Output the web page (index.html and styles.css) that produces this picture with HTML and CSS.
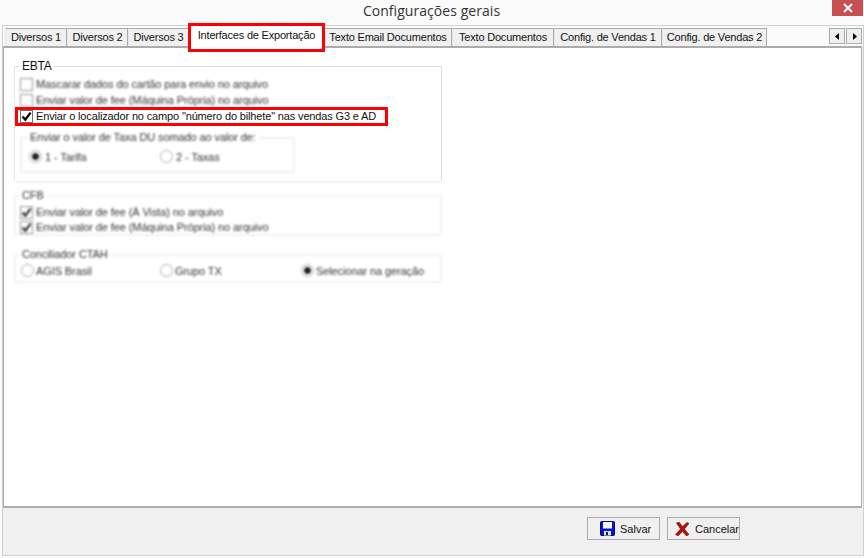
FILE: index.html
```html
<!DOCTYPE html>
<html lang="en">
<head>
    <meta charset="UTF-8">
    <title>Configurações gerais</title>
    <link rel="stylesheet" href="styles.css">
</head>
<body>
    <div class="window">
        <div class="titlebar">
            <span class="title">Configurações gerais</span>
            <span class="close">
                <svg width="10" height="10" viewBox="0 0 10 10"><path d="M1 1L9 9M9 1L1 9" stroke="#fff" stroke-width="2"/></svg>
            </span>
        </div>

        <div class="frame">
            <div class="tabbar">
                <div class="tab w-div1">Diversos 1</div>
                <div class="tab w-div2">Diversos 2</div>
                <div class="tab w-div3">Diversos 3</div>
                <div class="tab tab-active">Interfaces de Exportação</div>
                <div class="tab w-email">Texto Email Documentos</div>
                <div class="tab w-docs">Texto Documentos</div>
                <div class="tab w-cfg1">Config. de Vendas 1</div>
                <div class="tab w-cfg2">Config. de Vendas 2</div>
                <div class="tab-scroll">
                    <span class="scroll-btn"><svg width="5" height="7" viewBox="0 0 5 7"><path d="M4 0V7L0 3.5Z" fill="#000"/></svg></span>
                    <span class="scroll-btn"><svg width="5" height="7" viewBox="0 0 5 7"><path d="M1 0V7L5 3.5Z" fill="#000"/></svg></span>
                </div>
            </div>

            <div class="panel">
                <!-- EBTA -->
                <fieldset class="group group-ebta">
                    <legend class="legend-sharp">EBTA</legend>
                    <div class="row soft"><span class="check"></span>Mascarar dados do cartão para envio no arquivo</div>
                    <div class="row soft"><span class="check"></span>Enviar valor de fee (Máquina Própria) no arquivo</div>
                    <div class="row row-marked"><span class="check check-sharp"><svg width="11" height="11" viewBox="0 0 11 11"><path d="M1.5 5.5L4.3 8.6L9.6 1.6" fill="none" stroke="#000" stroke-width="2.3"/></svg></span>Enviar o localizador no campo "número do bilhete" nas vendas G3 e AD</div>
                    <fieldset class="group group-inner soft">
                        <legend>Enviar o valor de Taxa DU somado ao valor de:</legend>
                        <div class="radios">
                            <div class="radio-item item-a"><span class="radio radio-on"></span>1 - Tarifa</div>
                            <div class="radio-item"><span class="radio"></span>2 - Taxas</div>
                        </div>
                    </fieldset>
                </fieldset>
                <div class="ebta-fade soft"></div>

                <!-- CFB -->
                <fieldset class="group group-cfb soft">
                    <legend>CFB</legend>
                    <div class="row"><span class="check check-on"><svg width="11" height="11" viewBox="0 0 11 11"><path d="M1.5 5.5L4.3 8.6L9.6 1.6" fill="none" stroke="#333" stroke-width="2.3"/></svg></span>Enviar valor de fee (À Vista) no arquivo</div>
                    <div class="row"><span class="check check-on"><svg width="11" height="11" viewBox="0 0 11 11"><path d="M1.5 5.5L4.3 8.6L9.6 1.6" fill="none" stroke="#333" stroke-width="2.3"/></svg></span>Enviar valor de fee (Máquina Própria) no arquivo</div>
                </fieldset>

                <!-- Conciliador -->
                <fieldset class="group group-ctah soft">
                    <legend>Conciliador CTAH</legend>
                    <div class="radios">
                        <div class="radio-item item-b"><span class="radio"></span>AGIS Brasil</div>
                        <div class="radio-item item-c"><span class="radio"></span>Grupo TX</div>
                        <div class="radio-item"><span class="radio radio-on"></span>Selecionar na geração</div>
                    </div>
                </fieldset>
            </div>

            <div class="footer">
                <button class="btn btn-save" type="button">
                    <svg width="15" height="15" viewBox="0 0 15 15">
                        <rect x="0.5" y="0.5" width="14" height="14" rx="1" fill="#0a14e0" stroke="#050a60"/>
                        <rect x="3" y="1" width="9" height="6.5" fill="#f4f4f4"/>
                        <rect x="4" y="10" width="7" height="4.5" fill="#e8e8e8"/>
                        <rect x="6" y="11" width="2" height="3" fill="#123"/>
                    </svg>
                    <span>Salvar</span>
                </button>
                <button class="btn btn-cancel" type="button">
                    <svg width="15" height="14" viewBox="0 0 15 14"><path d="M1.5 1L4 0L7.5 4.5L12 0.5L14 1.5L9.5 7L14 12.5L11.5 14L7.5 9.5L3 14L0.5 12.5L5.5 7Z" fill="#b01212" stroke="#701010" stroke-width="0.6"/></svg>
                    <span>Cancelar</span>
                </button>
            </div>
        </div>
    </div>
</body>
</html>
```

FILE: styles.css
```css
* {
    box-sizing: border-box;
}
html, body {
    margin: 0;
    height: 100%;
}
body {
    font-family: "Liberation Sans", sans-serif;
    font-size: 11px;
    letter-spacing: -0.2px;
    color: #111;
    background: #fbfbfb;
}
.window {
    height: 558px;
    display: flex;
    flex-direction: column;
    padding: 0 0 2px 2px;
}
.titlebar {
    height: 23px;
    flex: none;
    display: flex;
    justify-content: center;
    position: relative;
    margin-bottom: 2px;
}
.title {
    font-family: "Open Sans", sans-serif;
    font-size: 14px;
    letter-spacing: 0.05px;
    color: #333;
    line-height: 22px;
    margin-left: -3px;
}
.close {
    position: absolute;
    top: 0;
    right: 1px;
    width: 31px;
    height: 16px;
    background: #c75050;
    display: flex;
    align-items: center;
    justify-content: center;
}
.frame {
    flex: 1;
    display: flex;
    flex-direction: column;
    background: #f0f0f0;
    border: 1px solid #d0d0d0;
}

/* tabs */
.tabbar {
    height: 20px;
    flex: none;
    display: flex;
    align-items: flex-end;
    padding: 2px 0 0 2px;
    position: relative;
    background: #fbfbfb;
}
.tab {
    height: 18px;
    line-height: 16px;
    text-align: center;
    white-space: nowrap;
    background: #f0f0f0;
    border: 1px solid #aaa;
    border-bottom: none;
    border-left-color: #e6e6e6;
}
.w-div1 { width: 62px; }
.w-div2 { width: 61px; }
.w-div3 { width: 61px; }
.w-email { width: 128px; }
.w-docs { width: 102px; }
.w-cfg1 { width: 108px; }
.w-cfg2 { width: 105px; }
.tab-active {
    width: 137px;
    height: 29px;
    margin: 0 -1px -6px -1px;
    line-height: 19px;
    background: #fff;
    border: 3px solid #f00;
    position: relative;
    z-index: 1;
}
.tab-scroll {
    position: absolute;
    top: 2px;
    right: 1px;
    display: flex;
    gap: 1px;
}
.scroll-btn {
    width: 16px;
    height: 16px;
    background: #efefef;
    border: 1px solid #aaa;
    display: flex;
    align-items: center;
    justify-content: center;
}

/* main white panel */
.panel {
    height: 462px;
    width: 859px;
    flex: none;
    background: #fff;
    border: 2px solid #acacac;
    border-left-width: 1px;
    border-right-width: 1px;
    padding: 12px 0 0 10px;
    display: flex;
    flex-direction: column;
}
.group {
    margin: 0;
    padding: 0;
    min-width: 0;
    width: 428px;
    border: 2px solid #ddd;
    border-radius: 2px;
}
.group legend {
    padding: 0 2px;
    margin-left: 4px;
    line-height: 13px;
}
.soft {
    filter: blur(1.3px);
    letter-spacing: -0.1px;
    color: #333;
}
.group-ebta {
    height: 121px;
    border: none;
    border-top: 1px solid #ddd;
    border-right: 1px solid #ddd;
    border-left: 1px solid #e6e6e6;
    padding: 3px 0 0 5px;
    position: relative;
}
.group .legend-sharp {
    margin-left: 0;
    color: #111;
    font-size: 12px;
}
.row {
    height: 15px;
    line-height: 15px;
    display: flex;
    align-items: center;
    white-space: nowrap;
}
.row.soft {
    height: 16px;
}
.row-marked {
    width: 373px;
    height: 19px;
    margin: -1px 0 0 -5px;
    padding-left: 2px;
    border: 3px solid #f00;
    background: #fff;
    position: relative;
    letter-spacing: -0.15px;
    color: #111;
}
.check {
    width: 13px;
    height: 13px;
    flex: none;
    margin-right: 3px;
    border: 1px solid #999;
    background: #fff;
    display: flex;
    align-items: center;
    justify-content: center;
}
.check-sharp {
    border-color: #707070;
}
.group-inner {
    width: 275px;
    height: 42px;
    margin-top: 5px;
    margin-left: 0;
    border-color: #f0f0f0;
}
.group-inner legend {
    margin-left: 6px;
}
.group-inner .radio {
    margin-right: 3px;
}
.radios {
    display: flex;
    align-items: center;
    height: 17px;
    margin-top: 4px;
    margin-left: 7px;
}
.radio-item {
    display: flex;
    align-items: center;
    white-space: nowrap;
}
.item-a {
    width: 131px;
}
.item-b {
    width: 139px;
}
.item-c {
    width: 141px;
}
.radio {
    width: 13px;
    height: 13px;
    margin-right: 2px;
    border: 1px solid #aaa;
    border-radius: 50%;
    background: #fff;
    display: inline-block;
}
.radio-on {
    background: radial-gradient(circle, #222 0 3px, #fff 4px);
}
.ebta-fade {
    width: 428px;
    height: 2px;
    background: #f0f0f0;
}
.group-cfb {
    height: 47px;
    margin-top: 6px;
    padding: 3px 0 0 4px;
    border-color: #f2f2f2;
}
.group-cfb legend {
    margin-left: 0;
}
.group-ctah {
    height: 35px;
    margin-top: 12px;
    border-color: #f2f2f2;
}
.group-ctah .radios {
    margin-top: 1px;
    margin-left: 5px;
}

/* bottom buttons */
.footer {
    flex: 1;
    display: flex;
    justify-content: flex-end;
    align-items: flex-start;
    gap: 7px;
    padding: 9px 123px 0 0;
    background: #f0f0f0;
}
.btn {
    width: 73px;
    height: 23px;
    padding: 0;
    display: flex;
    align-items: center;
    gap: 5px;
    font: inherit;
    letter-spacing: 0;
    color: #111;
    background: #f0f0f0;
    border: 1px solid #adadad;
}
.btn-save {
    padding-left: 12px;
}
.btn-cancel {
    padding-left: 7px;
}
```
